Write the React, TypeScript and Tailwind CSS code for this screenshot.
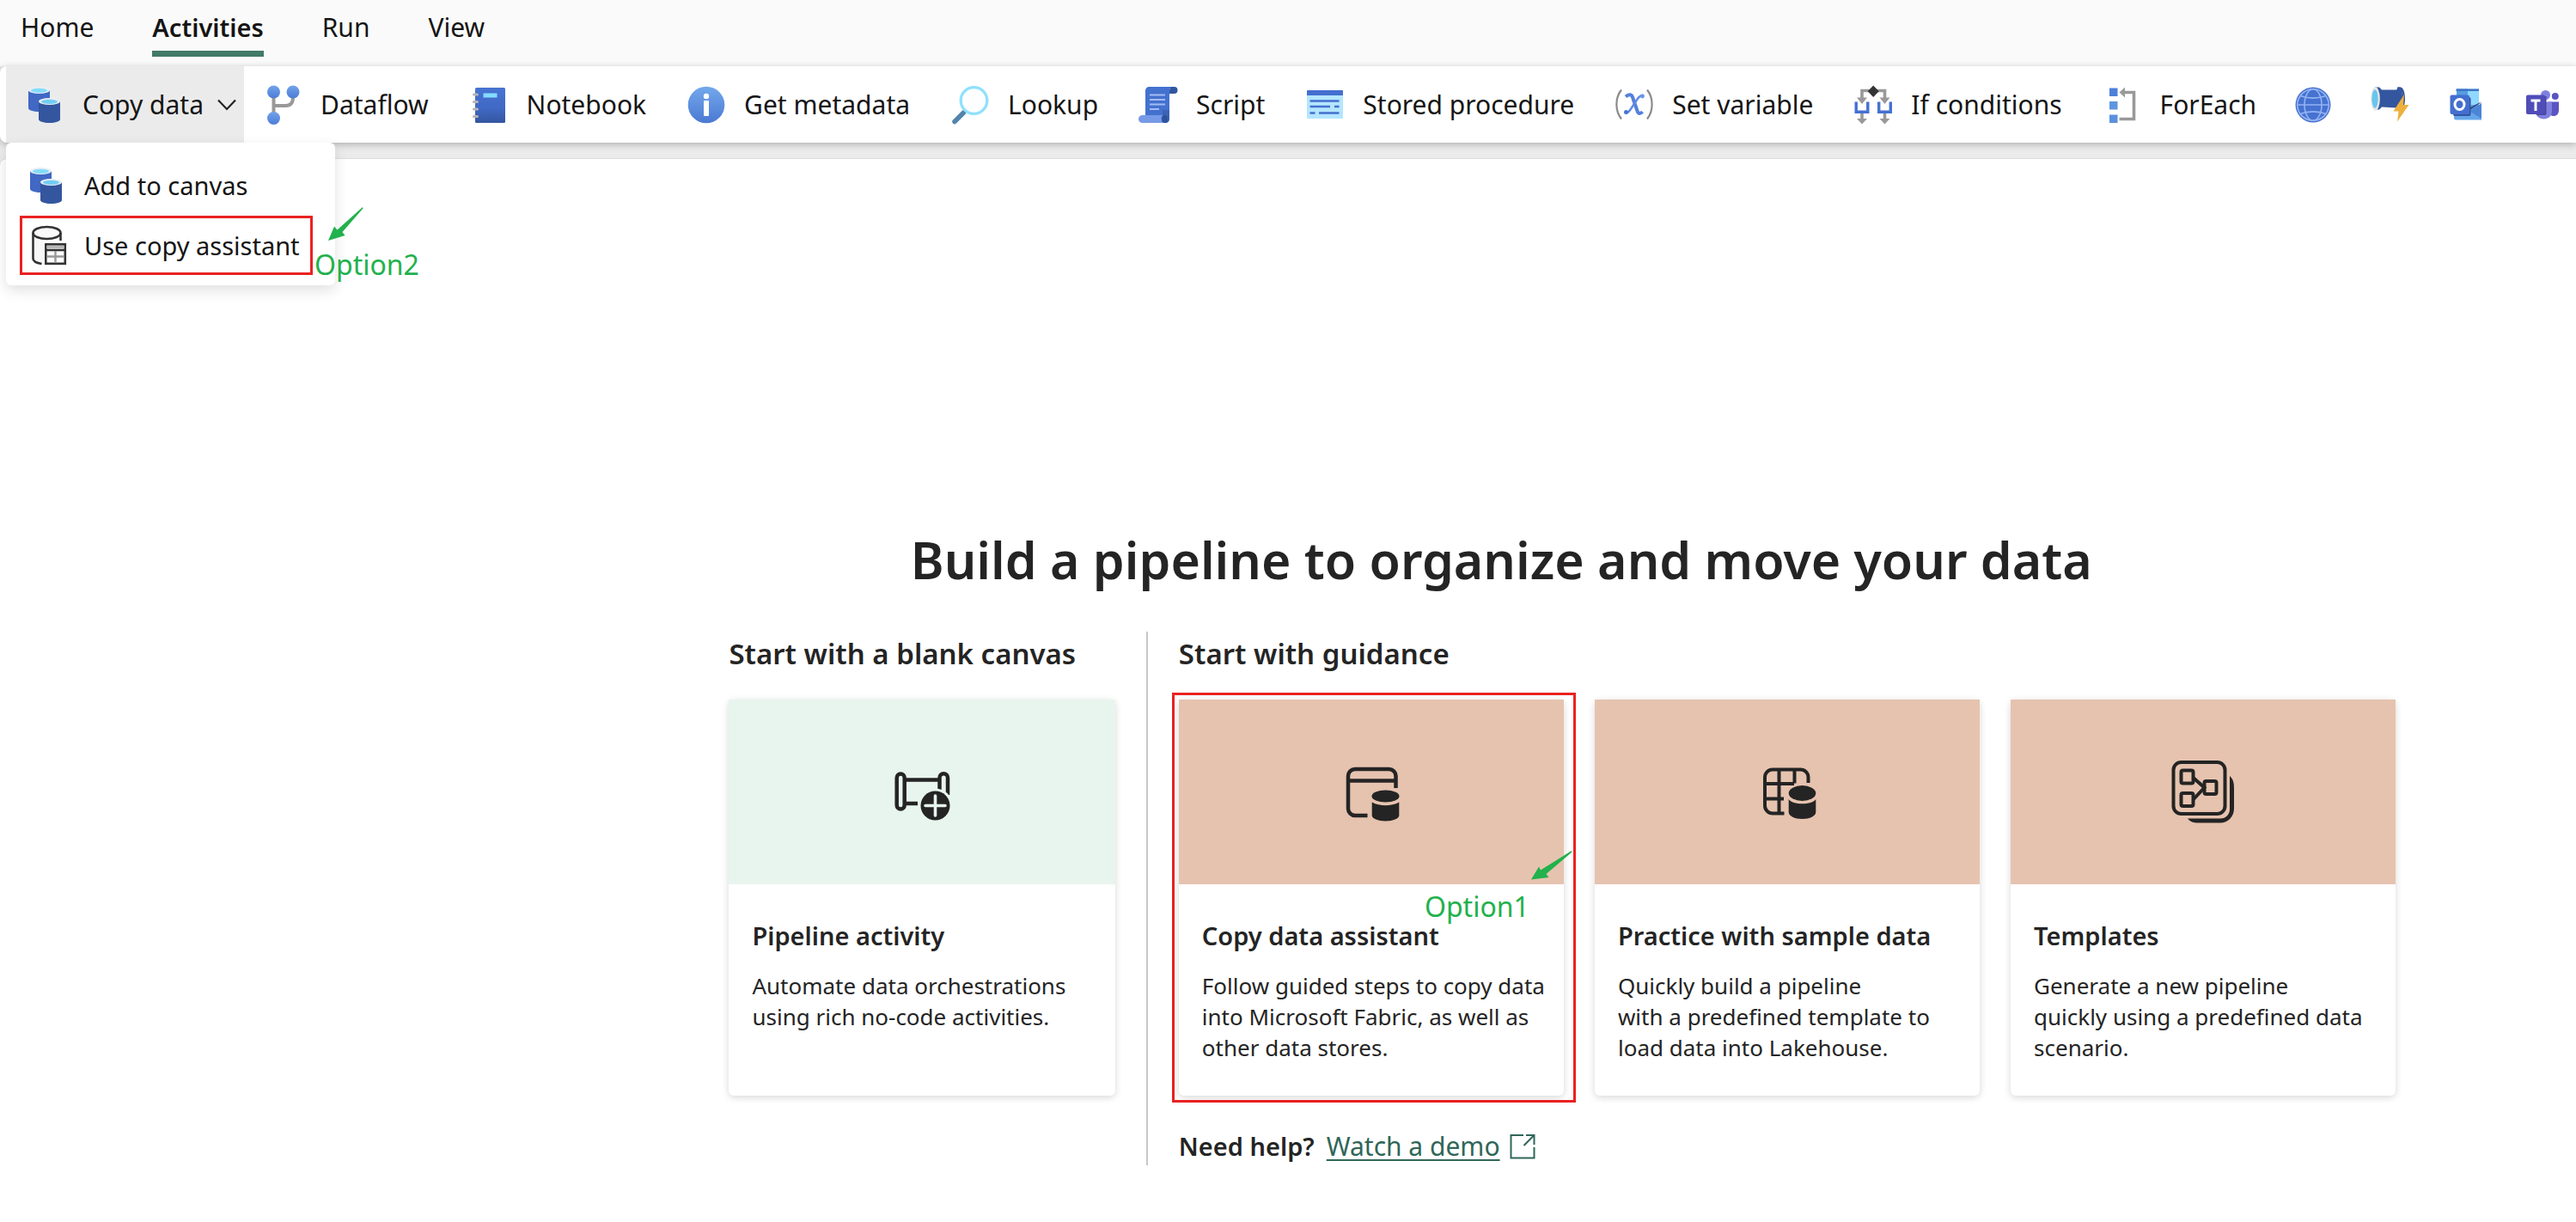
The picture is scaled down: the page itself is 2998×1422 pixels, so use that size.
import React from "react";

function Svg({ children, className = "size-12 shrink-0", box = "0 0 48 48" }: { children: React.ReactNode; className?: string; box?: string }) {
  return (
    <svg viewBox={box} className={className} fill="none" aria-hidden="true">
      {children}
    </svg>
  );
}

function CopyIcon() {
  return (
    <Svg>
      <path d="M5 7v21c0 2.200 5.500 4 12.500 4s12.500-1.800 12.500-4V7z" fill="#4068c4" />
      <ellipse cx="17.500" cy="7" rx="12.500" ry="4" fill="#e9eef5" />
      <ellipse cx="17.500" cy="7.300" rx="9.500" ry="2.600" fill="#83dcf8" />
      <path d="M17 20v21c0 2.200 5.500 4 12.500 4s12.500-1.800 12.500-4V20z" fill="#34569f" />
      <ellipse cx="29.500" cy="20" rx="12.500" ry="4" fill="#e9eef5" />
      <ellipse cx="29.500" cy="20.300" rx="9.500" ry="2.600" fill="#72cdf2" />
    </Svg>
  );
}

function DataflowIcon() {
  return (
    <Svg>
      <defs>
        <linearGradient id="dfg" x1="0" y1="0" x2="0" y2="1">
          <stop stopColor="#73a3ea" />
          <stop offset="1" stopColor="#4c7cd6" />
        </linearGradient>
      </defs>
      <path d="M13.500 14v20M13.500 25h14c6 0 8.500-4 8.500-10" stroke="#999" strokeWidth="4" />
      <circle cx="13.500" cy="9" r="7.500" fill="url(#dfg)" />
      <circle cx="36" cy="9" r="7.500" fill="url(#dfg)" />
      <circle cx="13.500" cy="39.500" r="7.500" fill="url(#dfg)" />
    </Svg>
  );
}

function NotebookIcon() {
  return (
    <Svg>
      <defs>
        <linearGradient id="nbg" x1="0" y1="0" x2="0" y2="1">
          <stop stopColor="#4874d2" />
          <stop offset="0.600" stopColor="#4068c4" />
          <stop offset="1" stopColor="#34569f" />
        </linearGradient>
      </defs>
      <rect x="8" y="4" width="35" height="41" rx="1.500" fill="url(#nbg)" />
      <rect x="17.500" y="10.500" width="16" height="5" fill="#83dcff" />
      <path d="M6.500 12h4M6.500 20.500h4M6.500 29h4M6.500 37.500h4" stroke="#b5b5b5" strokeWidth="3" strokeLinecap="round" />
    </Svg>
  );
}

function InfoIcon() {
  return (
    <Svg>
      <defs>
        <linearGradient id="ifg" x1="0" y1="0" x2="0" y2="1">
          <stop stopColor="#73a8ec" />
          <stop offset="1" stopColor="#4b79d2" />
        </linearGradient>
      </defs>
      <circle cx="24" cy="24" r="21.300" fill="url(#ifg)" />
      <circle cx="24" cy="14" r="3.200" fill="#fff" />
      <rect x="21" y="19" width="6" height="18" rx="1" fill="#fff" />
    </Svg>
  );
}

function LookupIcon() {
  return (
    <Svg>
      <path d="M16.500 33L6 43.500" stroke="#5384ad" strokeWidth="5.500" strokeLinecap="round" />
      <circle cx="28.500" cy="19" r="15.300" fill="#fdfeff" stroke="#8fe1fd" strokeWidth="3.300" />
    </Svg>
  );
}

function ScriptIcon() {
  return (
    <Svg>
      <path d="M38 3h4.500a4 4 0 0 1 0 8H36z" fill="#31569f" />
      <path d="M9 7.500A4.500 4.500 0 0 1 13.500 3H41c-3 0-4 2-4 4.500V40c0 3-2 5-5 5H9z" fill="#4471cf" />
      <path d="M25 45c3 0 4-2 4-4.500V30h8v10c0 3-2 5-5 5z" fill="#3b62b3" />
      <path d="M5.500 36H30c-2.500 1-3 3-2 5.500.700 2 2 3.500 4 3.500H5.500a4.500 4.500 0 0 1 0-9z" fill="#779ae8" />
      <ellipse cx="31.500" cy="40.500" rx="3.500" ry="4.500" fill="#2f539b" />
      <path d="M14 12.500h18M14 18h18M14 23.500h18M14 29h11" stroke="#a3bdf2" strokeWidth="2.200" />
    </Svg>
  );
}

function ProcedureIcon() {
  return (
    <Svg>
      <rect x="3" y="7" width="42" height="33" rx="1" fill="#b4e6ff" />
      <path d="M3 8a1 1 0 0 1 1-1h40a1 1 0 0 1 1 1v5H3z" fill="#446fd0" />
      <path d="M6.500 19.500h34M6.500 26h23.500M35 26h5.500M6.500 33.500h6M17 33.500h23.500" stroke="#4470cf" strokeWidth="2.600" />
    </Svg>
  );
}

function VariableIcon() {
  return (
    <Svg>
      <path d="M9 6.500C1.500 16 1.500 31 9 40.500M39 6.500C46.500 16 46.500 31 39 40.500" stroke="#8a8a8a" strokeWidth="2.200" />
      <path d="M14 14.500c3-2.500 6.500-3.500 8 .500l5.500 16c1.200 3.600 3.500 4 6 1" stroke="#5480dc" strokeWidth="4" />
      <path d="M34.500 13c-3.500-.500-5 1.500-7 4.500l-8 12c-2 3-4 4.500-6.500 3.500" stroke="#5f8ae2" strokeWidth="2.400" />
      <circle cx="33.500" cy="14" r="2.400" fill="#6a95ea" />
      <circle cx="14.500" cy="32.500" r="2.500" fill="#4774d4" />
    </Svg>
  );
}

function IfIcon() {
  return (
    <Svg>
      <path d="M11 17V7.500h26.500V17M11 34v8M37.500 34v8" stroke="#999" strokeWidth="3.600" />
      <path d="M5 15.500h12L11 23zM31.500 15.500h12l-6 7.500zM5 40h12l-6 6.500zM31.500 40h12l-6 6.500z" fill="#999" />
      <path d="M24.200 1.500l6.500 6.700-6.500 6.700-6.500-6.700z" fill="#333" />
      <path d="M4.200 20.500v11.700h13.600V20.500M30.700 20.500v11.700h13.600V20.500" stroke="#4471d2" strokeWidth="3.400" />
    </Svg>
  );
}

function ForEachIcon() {
  return (
    <Svg>
      <rect x="9" y="4.500" width="9.500" height="9.500" fill="#4d80d8" />
      <rect x="9" y="20" width="9.500" height="9.500" fill="#6096e0" />
      <rect x="9" y="35.500" width="9.500" height="9.500" fill="#5b90de" />
      <path d="M25 9.500h12.500V40.500H20.500" stroke="#999" strokeWidth="3.600" />
      <path d="M27 3.500v12l-6.500-6z" fill="#999" />
    </Svg>
  );
}

function GlobeIcon() {
  return (
    <Svg>
      <circle cx="24" cy="24" r="20.500" fill="#4672d0" />
      <g stroke="#94b3f3" strokeWidth="1.600">
        <circle cx="24" cy="24" r="18.300" />
        <ellipse cx="24" cy="24" rx="10" ry="18.300" />
        <path d="M5.700 24h36.600M9 13.500c9 3.500 21 3.500 30 0M9 34.500c9-3.500 21-3.500 30 0" />
      </g>
    </Svg>
  );
}

function PipeIcon() {
  return (
    <Svg>
      <path d="M33 3.500h4c3.500 1 5 7 5 13.500S40 30 37 31h-4z" fill="#34569f" />
      <path d="M34 4.500c5 3.500 6 22 0 25.500" stroke="#e3e6ea" strokeWidth="2.400" />
      <path d="M7 3.500h5l3 3h17l2-3h2.500c3.500 6 3.500 20 0 27H34l-2-3-17-1-3 3H7z" fill="#34569f" />
      <ellipse cx="7.500" cy="17" rx="5.300" ry="13.700" fill="#e8e8e8" />
      <ellipse cx="7" cy="17" rx="3.600" ry="10.800" fill="#69c5ec" />
      <path d="M41 12L28.500 31.500h6L33 43.500l13.500-19.500h-6.500z" fill="#eeb03c" />
    </Svg>
  );
}

function OutlookIcon() {
  return (
    <Svg>
      <path d="M13 5.500h26v20H13z" fill="#8fd8ff" />
      <path d="M13 5.500h13v10H13z" fill="#559de0" />
      <path d="M12.500 5.500h26.500v2.500H12.500z" fill="#3f74c6" />
      <path d="M10 24h32v17.500H12a2 2 0 0 1-2-2z" fill="#65a5ea" />
      <path d="M42 22v18L28 31.500z" fill="#4c85d6" />
      <path d="M42 21L28 30.500v-3l11.500-6z" fill="#2c4a86" />
      <rect x="9" y="15" width="20.500" height="22" rx="2" fill="#34559d" />
      <rect x="5.500" y="12.500" width="22.500" height="22.500" rx="2" fill="#436fd0" />
      <ellipse cx="16.500" cy="23.500" rx="5.500" ry="6" stroke="#fff" strokeWidth="3" />
    </Svg>
  );
}

function TeamsIcon() {
  return (
    <Svg>
      <circle cx="27.500" cy="12.500" r="5.500" fill="#8080e0" />
      <circle cx="38.800" cy="14" r="4" fill="#5a55c0" />
      <path d="M31 20.500h12v9.500c0 4.500-2.500 7-6 7s-6-2.500-6-7z" fill="#5a55c0" />
      <path d="M16 20.500h19V31c0 6-4 9.500-9.500 9.500S16 37 16 31z" fill="#8080e0" />
      <path d="M16 14h12.500v20c0 1-.500 2-2 2H17z" fill="#4a489c" />
      <rect x="5" y="12.500" width="22" height="22.500" rx="2" fill="#4f4db8" />
      <path d="M10.500 19h11M16 19v12" stroke="#fff" strokeWidth="3" />
    </Svg>
  );
}

function AssistantMenuIcon() {
  return (
    <Svg>
      <path d="M8 10v29c0 3 5 5 10.500 6H20V18z" fill="#f8f8f8" />
      <ellipse cx="24.500" cy="9" rx="16" ry="7" fill="#fafafa" stroke="#333" strokeWidth="2.600" />
      <path d="M8.500 9v30c0 3 4 5 10 6M40.500 9v9" stroke="#333" strokeWidth="2.600" />
      <rect x="23.300" y="22.300" width="22.500" height="22.500" fill="#fff" stroke="#333" strokeWidth="2.600" />
      <path d="M24.500 25.500h20" stroke="#b8b8b8" strokeWidth="3" />
      <path d="M23.500 29h22" stroke="#333" strokeWidth="2.600" />
      <path d="M34.500 30v14M24.500 36.500h20" stroke="#999" strokeWidth="2.400" />
    </Svg>
  );
}

function Chevron() {
  return (
    <Svg className="size-6" box="0 0 24 24">
      <path d="M2 6.500l10 10.500 10-10.500" stroke="#222" strokeWidth="2.200" />
    </Svg>
  );
}

function PipelineArt() {
  return (
    <Svg className="size-20" box="0 0 80 80">
      <g stroke="#242424" strokeWidth="4.500">
        <rect x="10.700" y="18.500" width="9" height="41" rx="4.500" />
        <path d="M20 25.500h40M20 53h15" />
        <path d="M60.500 42V23a4.500 4.500 0 0 1 9.500 0v20" />
      </g>
      <circle cx="55.500" cy="55.500" r="20" fill="#e8f5ee" />
      <circle cx="55.500" cy="55.500" r="17" fill="#242424" />
      <path d="M44 55.500h23M55.500 44v23" stroke="#e8f5ee" strokeWidth="3.600" strokeLinecap="round" />
    </Svg>
  );
}

function AssistantArt() {
  return (
    <Svg className="size-20" box="0 0 80 80">
      <path d="M35.500 67H21a8 8 0 0 1-8-8V21a8 8 0 0 1 8-8h39.500a8 8 0 0 1 8 8v14M13 26.500h55" stroke="#242424" strokeWidth="4.500" />
      <ellipse cx="56.500" cy="44.500" rx="16" ry="7" fill="#242424" />
      <path d="M40.700 51.500c9 5 22.600 5 31.600 0V67c0 3.500-7 6.500-15.800 6.500S40.700 70.500 40.700 67z" fill="#242424" />
    </Svg>
  );
}

function SampleArt() {
  return (
    <Svg className="size-20" box="0 0 80 80">
      <g stroke="#242424" strokeWidth="4">
        <path d="M36.500 64.500H23a9 9 0 0 1-9-9V22.500a9 9 0 0 1 9-9h32.500a9 9 0 0 1 9 9V29" />
        <path d="M30.500 13.500v51M48.500 13.500v16M14 30h34M14 47.500h22" />
      </g>
      <ellipse cx="57.500" cy="41" rx="15.800" ry="9" fill="#242424" />
      <path d="M41.700 48c4 7 27.600 7 31.600 0v15c0 4.500-7 8-15.800 8s-15.800-3.500-15.800-8z" fill="#242424" />
    </Svg>
  );
}

function TemplatesArt() {
  return (
    <Svg className="size-20" box="0 0 80 80">
      <g stroke="#242424" strokeWidth="4">
        <rect x="5.500" y="5" width="60" height="60" rx="9" />
        <rect x="14.500" y="14.500" width="14" height="15" rx="2" />
        <rect x="14.500" y="41" width="14" height="15" rx="2" />
        <rect x="41.500" y="27" width="14" height="15" rx="2" />
        <path d="M28.500 23l13 11.500-13 14" />
      </g>
      <path d="M71 21c4.500 4 5 9 5 14v24c0 9-7 16.500-16 16.500H34c-5 0-9-1-12-5h38c7 0 11-5 11-11z" fill="#242424" />
    </Svg>
  );
}

const tabs = ["Home", "Activities", "Run", "View"];

const tools: { label: string; icon: () => React.ReactElement }[] = [
  { label: "Dataflow", icon: DataflowIcon },
  { label: "Notebook", icon: NotebookIcon },
  { label: "Get metadata", icon: InfoIcon },
  { label: "Lookup", icon: LookupIcon },
  { label: "Script", icon: ScriptIcon },
  { label: "Stored procedure", icon: ProcedureIcon },
  { label: "Set variable", icon: VariableIcon },
  { label: "If conditions", icon: IfIcon },
  { label: "ForEach", icon: ForEachIcon },
];

const iconTools: { label: string; icon: () => React.ReactElement }[] = [
  { label: "Web", icon: GlobeIcon },
  { label: "Invoke pipeline", icon: PipeIcon },
  { label: "Office 365 Outlook", icon: OutlookIcon },
  { label: "Teams", icon: TeamsIcon },
];

function Card({ title, lines, tone, art }: { title: string; lines: string[]; tone: string; art: React.ReactNode }) {
  return (
    <button type="button" className="flex h-[461px] w-full flex-col rounded-md bg-white text-left shadow-[0_2px_8px_rgba(0,0,0,0.16)]">
      <span className={`flex h-[215px] w-full items-center justify-center ${tone}`}>{art}</span>
      <span className="flex flex-col gap-5 px-[27px] pt-10">
        <span className="text-[29px] leading-10 font-semibold whitespace-nowrap">{title}</span>
        <span className="text-[26px] leading-9 whitespace-nowrap">
          {lines.map((l) => (
            <span key={l} className="block">{l}</span>
          ))}
        </span>
      </span>
    </button>
  );
}

export default function App() {
  return (
    <div className="flex min-h-screen flex-col overflow-x-hidden bg-[#ebebeb] font-['Noto_Sans',sans-serif] text-[#242424]">
      <nav className="flex h-[77px] items-start gap-[68px] bg-[#fafafa] pl-6 leading-10 text-[#151515]">
        {tabs.map((t) => (
          <button
            key={t}
            type="button"
            className={
              t === "Activities"
                ? "h-[66px] border-b-[7px] border-[#437a68] pt-3 pb-[7px] text-[29px] font-semibold"
                : "h-[66px] pt-3 pb-[14px] text-[30px]"
            }
          >
            {t}
          </button>
        ))}
      </nav>

      <div className="relative z-10 flex h-[89px] items-center rounded-l-lg bg-white pl-[7px] text-[30px] leading-10 whitespace-nowrap text-[#151515] shadow-[0_2px_9px_rgba(0,0,0,0.26)]">
        <div className="relative h-full">
          <button type="button" aria-expanded="true" className="flex h-full w-[277px] items-center bg-[#ebebeb] pl-[21px]">
            <CopyIcon />
            <span className="ml-5">Copy data</span>
            <span className="mr-2 ml-auto"><Chevron /></span>
          </button>
          <div className="absolute top-full left-0 flex w-[383px] flex-col rounded-md bg-white px-4 pt-[14px] pb-3 text-[29px] shadow-[0_6px_16px_rgba(0,0,0,0.12)]">
            <button type="button" className="flex h-[71px] items-center gap-5 pl-[7px]">
              <CopyIcon />
              Add to canvas
            </button>
            <button type="button" className="flex h-[69px] w-[341px] items-center gap-5 border-[3px] border-[#e92121] pl-1">
              <AssistantMenuIcon />
              Use copy assistant
            </button>
            <div className="absolute top-[74px] left-[359px] flex flex-col gap-2 text-[32px] text-[#22b14c]">
              <Svg className="ml-4 h-10 w-11" box="0 0 44 40">
                <path d="M40 1l.500 1.500-24 27.500 3 4L0 40 7 23.500l3.500 4z" fill="#22b14c" />
              </Svg>
              <span>Option2</span>
            </div>
          </div>
        </div>
        <div className="ml-[21px] flex gap-[46px]">
          {tools.map(({ label, icon: Icon }) => (
            <button key={label} type="button" className="flex items-center gap-5">
              <Icon />
              {label}
            </button>
          ))}
        </div>
        <div className="ml-[42px] flex gap-[41px]">
          {iconTools.map(({ label, icon: Icon }) => (
            <button key={label} type="button" aria-label={label}>
              <Icon />
            </button>
          ))}
        </div>
      </div>

      <main className="mt-[18px] flex flex-1 flex-col rounded-tl-lg border-t border-[#dcdcdc] bg-white pt-[426px] pr-[7%] pl-[28.3%]">
        <h1 className="pr-[142px] text-center text-[59px] leading-[80px] font-semibold whitespace-nowrap">
          Build a pipeline to organize and move your data
        </h1>
        <div className="mt-11 grid grid-cols-[488fr_1454fr]">
          <section className="flex flex-col gap-[27px] border-r-2 border-[#c8c8c8] pr-9">
            <h2 className="text-[33px] leading-[52px] font-semibold whitespace-nowrap">Start with a blank canvas</h2>
            <Card
              title="Pipeline activity"
              lines={["Automate data orchestrations", "using rich no-code activities."]}
              tone="bg-[#e8f5ee]"
              art={<PipelineArt />}
            />
          </section>
          <section className="flex flex-col gap-[27px] pl-9">
            <h2 className="text-[33px] leading-[52px] font-semibold whitespace-nowrap">Start with guidance</h2>
            <div className="grid grid-cols-3 gap-9">
              <div className="relative">
                <Card
                  title="Copy data assistant"
                  lines={["Follow guided steps to copy data", "into Microsoft Fabric, as well as", "other data stores."]}
                  tone="bg-[#e6c3af]"
                  art={<AssistantArt />}
                />
                <div className="pointer-events-none absolute -top-2 -right-[14px] -bottom-2 -left-2 border-[3px] border-[#e92121]" />
                <div className="pointer-events-none absolute top-[175px] -right-[10px] flex w-[172px] flex-col gap-[10px] text-[32px] leading-10 text-[#22b14c]">
                  <Svg className="h-9 w-12 self-end" box="0 0 48 36">
                    <path d="M47 1l.500 1.500-30 25.500 3 4L0 34.500 9 19.500l2 4z" fill="#22b14c" />
                  </Svg>
                  <span>Option1</span>
                </div>
              </div>
              <Card
                title="Practice with sample data"
                lines={["Quickly build a pipeline", "with a predefined template to", "load data into Lakehouse."]}
                tone="bg-[#e6c3af]"
                art={<SampleArt />}
              />
              <Card
                title="Templates"
                lines={["Generate a new pipeline", "quickly using a predefined data", "scenario."]}
                tone="bg-[#e6c3af]"
                art={<TemplatesArt />}
              />
            </div>
            <p className="flex items-center gap-[14px] pt-3 pb-[2px] text-[30px] leading-10">
              <span className="text-[29px] font-semibold">Need help?</span>
              <a href="#demo" className="flex items-center gap-[10px] text-[#2f6658]">
                <span className="underline decoration-2 underline-offset-4">Watch a demo</span>
                <Svg className="size-8" box="0 0 32 32">
                  <path d="M17 3H2.500v26.500h27V17M20 3h9.500v11M29 3.500L17.500 15" stroke="#2f6658" strokeWidth="2" />
                </Svg>
              </a>
            </p>
          </section>
        </div>
      </main>
    </div>
  );
}
